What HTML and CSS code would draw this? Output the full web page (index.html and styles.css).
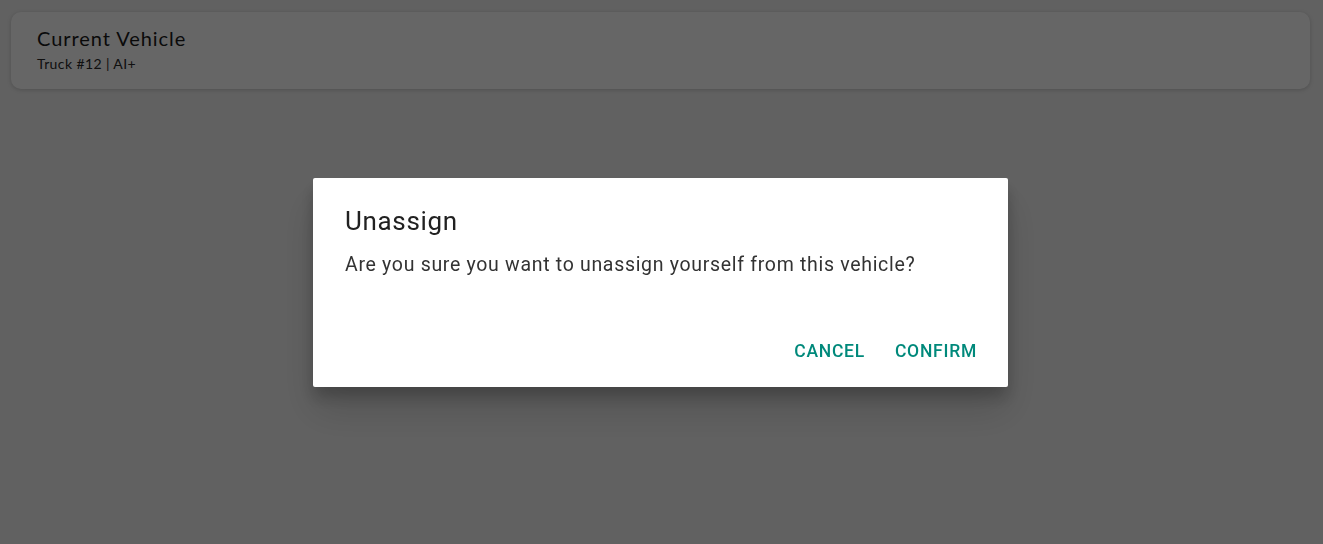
FILE: index.html
```html
<!DOCTYPE html>
<html>
<head>
<meta charset="utf-8">
<link rel="stylesheet" href="styles.css">
</head>
<body>
<div class="page">
  <div class="card">
    <div class="card-title">Current Vehicle</div>
    <div class="card-sub">Truck #12 | AI+</div>
  </div>
</div>
<div class="overlay">
  <div class="dialog">
    <div class="dialog-title">Unassign</div>
    <div class="dialog-body">Are you sure you want to unassign yourself from this vehicle?</div>
    <div class="dialog-actions">
      <button class="btn">CANCEL</button>
      <button class="btn">CONFIRM</button>
    </div>
  </div>
</div>
</body>
</html>
```
FILE: styles.css
```css
html, body {
  margin: 0;
  padding: 0;
  width: 1323px;
  height: 544px;
  overflow: hidden;
  background: #f2f2f2;
}
.page {
  padding: 12px 13px 0 11px;
}
.card {
  background: #ffffff;
  border-radius: 10px;
  height: 77px;
  box-sizing: border-box;
  padding: 13px 26px 0 26px;
  box-shadow: 0 1px 4px rgba(0,0,0,0.18);
  font-family: Lato, "Open Sans", sans-serif;
  color: #1a1a1a;
}
.card-title {
  font-size: 20px;
  line-height: 26px;
  letter-spacing: 0.95px;
}
.card-sub {
  margin-top: 4px;
  font-size: 14px;
  line-height: 18px;
  letter-spacing: 0.4px;
  color: #2a2a2a;
}
.overlay {
  position: fixed;
  inset: 0;
  background: rgba(0,0,0,0.6);
  display: flex;
  justify-content: center;
  align-items: flex-start;
  padding-top: 178px;
  padding-right: 2px;
  box-sizing: border-box;
}
.dialog {
  width: 695px;
  height: 209px;
  box-sizing: border-box;
  background: #fff;
  border-radius: 2px;
  padding: 27px 32px 0 32px;
  font-family: Roboto, "Noto Sans", sans-serif;
  box-shadow: 0 11px 15px rgba(0,0,0,0.2), 0 24px 38px rgba(0,0,0,0.14);
  display: flex;
  flex-direction: column;
}
.dialog-title {
  font-size: 26px;
  line-height: 32px;
  font-weight: 400;
  letter-spacing: 0.65px;
  color: #212121;
}
.dialog-body {
  margin-top: 16px;
  font-size: 19.5px;
  line-height: 24px;
  letter-spacing: 0.69px;
  color: #333;
}
.dialog-actions {
  margin-top: auto;
  margin-bottom: 20px;
  margin-right: -9px;
  display: flex;
  justify-content: flex-end;
  gap: 14px;
}
.btn {
  background: none;
  border: none;
  padding: 4px 8px;
  font-family: Roboto, "Noto Sans", sans-serif;
  font-weight: 500;
  font-size: 17.5px;
  line-height: 24px;
  color: #00897b;
  letter-spacing: 0.75px;
}
```
